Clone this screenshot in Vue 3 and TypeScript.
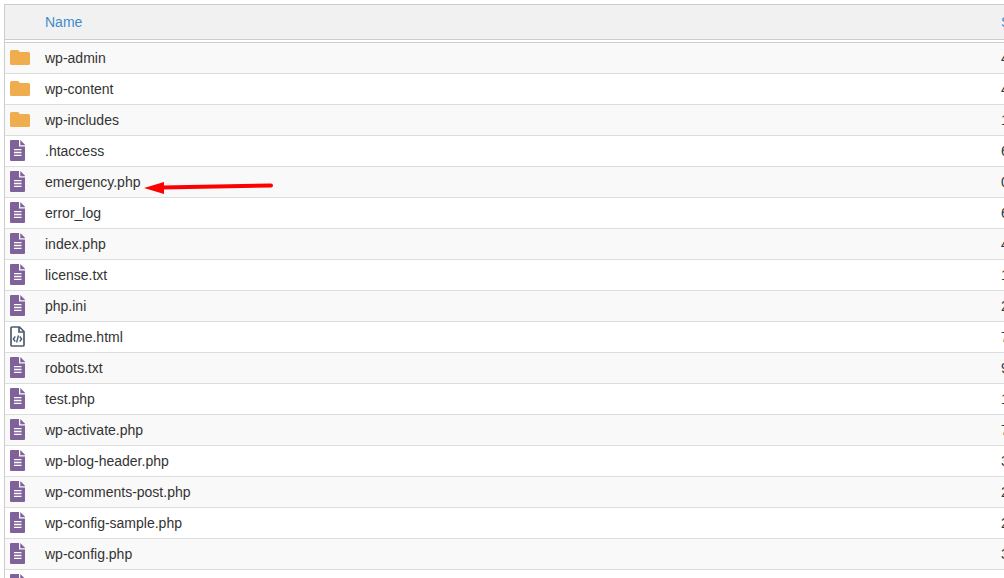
<script setup lang="ts">
type Kind = 'folder' | 'file' | 'code'

interface Entry {
  name: string
  kind: Kind
  size: string
}

const entries: Entry[] = [
  { name: 'wp-admin', kind: 'folder', size: '4 KB' },
  { name: 'wp-content', kind: 'folder', size: '4 KB' },
  { name: 'wp-includes', kind: 'folder', size: '12 KB' },
  { name: '.htaccess', kind: 'file', size: '6 KB' },
  { name: 'emergency.php', kind: 'file', size: '0 bytes' },
  { name: 'error_log', kind: 'file', size: '6 KB' },
  { name: 'index.php', kind: 'file', size: '4 KB' },
  { name: 'license.txt', kind: 'file', size: '19 KB' },
  { name: 'php.ini', kind: 'file', size: '2 KB' },
  { name: 'readme.html', kind: 'code', size: '7 KB' },
  { name: 'robots.txt', kind: 'file', size: '9 bytes' },
  { name: 'test.php', kind: 'file', size: '1 KB' },
  { name: 'wp-activate.php', kind: 'file', size: '7 KB' },
  { name: 'wp-blog-header.php', kind: 'file', size: '3 KB' },
  { name: 'wp-comments-post.php', kind: 'file', size: '2 KB' },
  { name: 'wp-config-sample.php', kind: 'file', size: '2 KB' },
  { name: 'wp-config.php', kind: 'file', size: '3 KB' },
  { name: 'wp-cron.php', kind: 'file', size: '3 KB' },
]

const marked = 'emergency.php'
</script>

<template>
  <main class="viewport">
    <table class="files">
      <colgroup>
        <col class="col-icon" />
        <col />
        <col class="col-size" />
      </colgroup>
      <thead>
        <tr>
          <th></th>
          <th scope="col"><a href="#name">Name</a></th>
          <th scope="col"><a href="#size">Size</a></th>
        </tr>
      </thead>
      <tbody>
        <tr v-for="entry in entries" :key="entry.name">
          <td class="icon-cell">
            <svg v-if="entry.kind === 'folder'" class="icon folder" viewBox="0 0 20 21" aria-hidden="true">
              <path d="M1.500 3H8L10 5H18.500Q20 5 20 6.500V16.500Q20 18 18.500 18H1.500Q0 18 0 16.500V4.500Q0 3 1.500 3Z" />
            </svg>
            <svg v-else-if="entry.kind === 'file'" class="icon file" viewBox="0 0 15 21" aria-hidden="true">
              <path d="M1 0H9V6.500H15V20Q15 21 14 21H1Q0 21 0 20V1Q0 0 1 0ZM10.300 0L15 4.700V5.300H10.300Z" />
              <path class="lines" d="M4 9.600H11.500M4 12.500H11.500M4 15.400H11.500" />
            </svg>
            <svg v-else class="icon code" viewBox="0 0 15 21" aria-hidden="true">
              <path d="M2 1H9.500L14 5.500V19Q14 20 13 20H2Q1 20 1 19V2Q1 1 2 1ZM9 1V6H14" stroke-width="1.700" />
              <path d="M5.300 10.500L3.300 13L5.300 15.500M9.700 10.500L11.700 13L9.700 15.500M8.400 9.500L6.600 16.500" stroke-width="1.400" />
            </svg>
          </td>
          <td>
            <span class="name">
              {{ entry.name }}
              <svg v-if="entry.name === marked" class="arrow" viewBox="0 0 130 14" aria-hidden="true">
                <path d="M0 8L20 2V14Z" />
                <path class="shaft" d="M18 7.500L127 5.500" />
              </svg>
            </span>
          </td>
          <td>{{ entry.size }}</td>
        </tr>
      </tbody>
    </table>
  </main>
</template>

<style>
html,
body {
  background: #fff;
}
</style>

<style scoped>
.viewport {
  box-sizing: border-box;
  height: 100vh;
  padding: 4px 0 0 4px;
  overflow: hidden;
  color: #333;
  font: 14px/20px "Liberation Sans", Arial, sans-serif;
}

.files {
  width: calc(100% + 77px);
  table-layout: fixed;
  border-collapse: separate;
  border-spacing: 0;
  border-top: 1px solid #ccc;
  border-left: 1px solid #ccc;
}

.col-icon {
  width: 35px;
}

.col-size {
  width: 85px;
}

th {
  padding: 7px 5px;
  border-bottom: 4px double #ccc;
  background: #f1f1f1;
  background-clip: padding-box;
  font-weight: 400;
  text-align: left;
}

td {
  height: 30px;
  padding: 0 5px;
  border-bottom: 1px solid #ddd;
  white-space: nowrap;
}

.icon-cell {
  height: 26px;
  padding-top: 4px;
  vertical-align: top;
}

tbody tr:nth-child(odd) {
  background: #f9f9f9;
}

a {
  color: #428bca;
  text-decoration: none;
}

.icon {
  display: block;
  height: 21px;
}

.folder {
  width: 20px;
  fill: #f0ad4e;
}

.file {
  width: 15px;
  fill: #7f6299;
}

.lines {
  stroke: #fff;
  stroke-width: 1.4;
}

.code {
  width: 15px;
  fill: none;
  stroke: #4e5d70;
}

.name {
  position: relative;
}

.arrow {
  position: absolute;
  top: 6px;
  left: 100%;
  width: 130px;
  height: 14px;
  margin-left: 4px;
  fill: #f00;
}

.shaft {
  fill: none;
  stroke: #f00;
  stroke-width: 4;
  stroke-linecap: round;
}
</style>
